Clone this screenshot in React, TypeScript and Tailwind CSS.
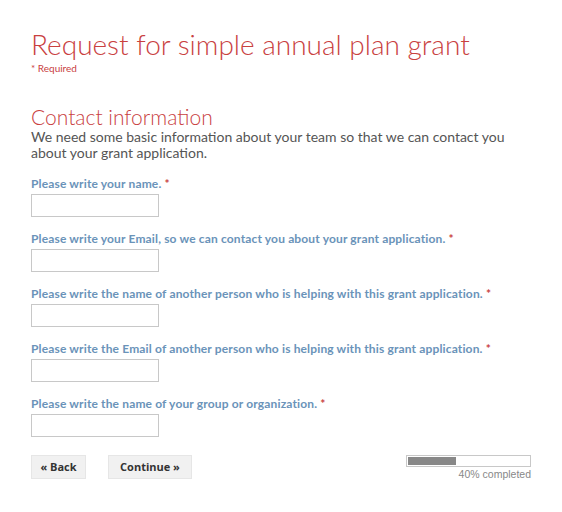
import React from 'react';

const fields = [
  'Please write your name.',
  'Please write your Email, so we can contact you about your grant application.',
  'Please write the name of another person who is helping with this grant application.',
  'Please write the Email of another person who is helping with this grant application.',
  'Please write the name of your group or organization.',
];

const Field = ({ label }: { label: string }) => (
  <div className="flex flex-col">
    <label className="text-[12px] font-bold leading-[14px] tracking-[0.15px] text-[#6a93b9]">
      {label} <span className="text-[#c9413f]">*</span>
    </label>
    <input
      type="text"
      className="mt-[3px] h-[23px] w-[128px] border border-[#c8c8c8] bg-white outline-none"
    />
  </div>
);

export default function App() {
  return (
    <div className="min-h-[512px] w-[562px] bg-white pl-[31px] pr-[31px] pt-[27px] font-['Lato',sans-serif]">
      <h1 className="text-[28px] font-light leading-[34px] text-[#c9413f]">
        Request for simple annual plan grant
      </h1>
      <p className="mt-[1px] text-[10px] leading-[12px] text-[#c9413f]">* Required</p>

      <h2 className="mt-[31px] text-[21px] font-light leading-[24px] text-[#c9413f]">Contact information</h2>
      <p className="text-[14px] leading-[16px] text-[#555]">
        We need some basic information about your team so that we can contact you about your grant application.
      </p>

      <div className="mt-[16px] flex flex-col gap-[15px]">
        {fields.map((f) => (
          <Field key={f} label={f} />
        ))}
      </div>

      <div className="mt-[18px] flex items-start justify-between">
        <div className="flex gap-[22px] font-['Open_Sans',sans-serif]">
          <button className="h-[24px] w-[55px] border border-[#e6e6e6] bg-[#f1f1f1] text-[11px] font-bold text-[#333]">
            « Back
          </button>
          <button className="h-[24px] w-[84px] border border-[#e6e6e6] bg-[#f1f1f1] text-[11px] font-bold text-[#333]">
            Continue »
          </button>
        </div>
        <div className="flex w-[125px] flex-col items-end">
          <div className="h-[12px] w-full border border-[#c8c8c8] bg-white p-[1px]">
            <div className="h-full w-[40%] bg-[#888]" />
          </div>
          <span className="mt-[1px] text-[10.5px] leading-[13px] text-[#888] font-['Liberation_Sans',sans-serif]">40% completed</span>
        </div>
      </div>
    </div>
  );
}
